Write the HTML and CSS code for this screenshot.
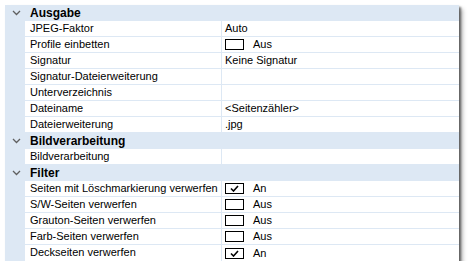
FILE: index.html
```html
<!DOCTYPE html>
<html>
<head>
<meta charset="utf-8">
<link rel="stylesheet" href="styles.css">
</head>
<body>
<div class="grid">
  <div class="cat"><span class="chev"><svg width="9" height="6" viewBox="0 0 9 6"><path d="M1 1 L4.5 4.5 L8 1" fill="none" stroke="#606060" stroke-width="1.3"/></svg></span><span class="cat-name">Ausgabe</span></div>
  <div class="row"><span class="gut"></span><span class="lbl">JPEG-Faktor</span><span class="val">Auto</span></div>
  <div class="row"><span class="gut"></span><span class="lbl">Profile einbetten</span><span class="val"><span class="box"></span>Aus</span></div>
  <div class="row"><span class="gut"></span><span class="lbl">Signatur</span><span class="val">Keine Signatur</span></div>
  <div class="row"><span class="gut"></span><span class="lbl">Signatur-Dateierweiterung</span><span class="val"></span></div>
  <div class="row"><span class="gut"></span><span class="lbl">Unterverzeichnis</span><span class="val"></span></div>
  <div class="row"><span class="gut"></span><span class="lbl">Dateiname</span><span class="val">&lt;Seitenzähler&gt;</span></div>
  <div class="row"><span class="gut"></span><span class="lbl">Dateierweiterung</span><span class="val">.jpg</span></div>
  <div class="cat"><span class="chev"><svg width="9" height="6" viewBox="0 0 9 6"><path d="M1 1 L4.5 4.5 L8 1" fill="none" stroke="#606060" stroke-width="1.3"/></svg></span><span class="cat-name">Bildverarbeitung</span></div>
  <div class="row"><span class="gut"></span><span class="lbl">Bildverarbeitung</span><span class="val"></span></div>
  <div class="cat"><span class="chev"><svg width="9" height="6" viewBox="0 0 9 6"><path d="M1 1 L4.5 4.5 L8 1" fill="none" stroke="#606060" stroke-width="1.3"/></svg></span><span class="cat-name">Filter</span></div>
  <div class="row"><span class="gut"></span><span class="lbl">Seiten mit Löschmarkierung verwerfen</span><span class="val"><span class="box"><svg width="9" height="7" viewBox="0 0 9 7"><path d="M1 3.5 L3.5 6 L8 1" fill="none" stroke="#000" stroke-width="1.6"/></svg></span>An</span></div>
  <div class="row"><span class="gut"></span><span class="lbl">S/W-Seiten verwerfen</span><span class="val"><span class="box"></span>Aus</span></div>
  <div class="row"><span class="gut"></span><span class="lbl">Grauton-Seiten verwerfen</span><span class="val"><span class="box"></span>Aus</span></div>
  <div class="row"><span class="gut"></span><span class="lbl">Farb-Seiten verwerfen</span><span class="val"><span class="box"></span>Aus</span></div>
  <div class="row"><span class="gut"></span><span class="lbl">Deckseiten verwerfen</span><span class="val"><span class="box"><svg width="9" height="7" viewBox="0 0 9 7"><path d="M1 3.5 L3.5 6 L8 1" fill="none" stroke="#000" stroke-width="1.6"/></svg></span>An</span></div>
</div>
</body>
</html>
```
FILE: styles.css
```css
html, body {
  margin: 0;
  padding: 0;
  background: #fff;
}
body {
  padding: 5px 0 0 5px;
  font-family: "Liberation Sans", Arial, sans-serif;
  font-size: 11px;
  color: #000;
}
.grid {
  width: 454px;
  background: #fff;
  box-shadow: 2px 2px 2px rgba(0,0,0,0.5), 4px 4px 4px rgba(0,0,0,0.25);
}
.cat {
  height: 16px;
  background: #dde8f4;
  display: flex;
  align-items: center;
}
.chev {
  width: 20px;
  display: flex;
  justify-content: center;
  padding-left: 2px;
  box-sizing: border-box;
}
.cat-name {
  font-weight: bold;
  font-size: 12px;
  padding-left: 5px;
  line-height: 16px;
}
.row {
  height: 16px;
  display: flex;
}
.gut {
  width: 20px;
  flex: none;
  background: #dde8f4;
}
.lbl {
  width: 197px;
  flex: none;
  box-sizing: border-box;
  padding-left: 5px;
  line-height: 15px;
  border-bottom: 1px solid #dde8f4;
  border-right: 1px solid #dde8f4;
  white-space: nowrap;
}
.val {
  flex: 1;
  box-sizing: border-box;
  padding-left: 3px;
  line-height: 15px;
  border-bottom: 1px solid #dde8f4;
  display: flex;
  align-items: center;
}
.row:last-child .lbl, .row:last-child .val {
  border-bottom: none;
}
.box {
  width: 17px;
  height: 9px;
  border: 1px solid #000;
  margin-right: 9px;
  display: flex;
  align-items: center;
  justify-content: center;
  background: #fff;
}
```
